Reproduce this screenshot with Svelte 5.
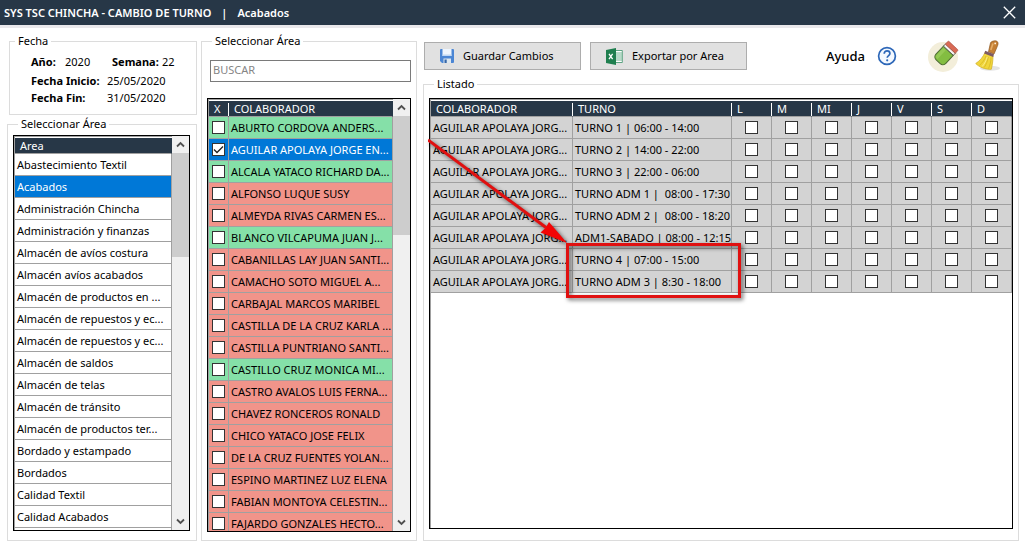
<script>
  const areas = [
    'Abastecimiento Textil', 'Acabados', 'Administración Chincha', 'Administración y finanzas',
    'Almacén de avíos costura', 'Almacén avíos acabados', 'Almacén de productos en ...',
    'Almacén de repuestos y ec...', 'Almacén de repuestos y ec...', 'Almacén de saldos',
    'Almacén de telas', 'Almacén de tránsito', 'Almacén de productos ter...',
    'Bordado y estampado', 'Bordados', 'Calidad Textil', 'Calidad Acabados'
  ];

  const people = $state([
    { name: 'ABURTO CORDOVA ANDERS...', ok: true, checked: false },
    { name: 'AGUILAR APOLAYA JORGE EN...', ok: true, checked: true },
    { name: 'ALCALA YATACO RICHARD DA...', ok: true, checked: false },
    { name: 'ALFONSO LUQUE SUSY', ok: false, checked: false },
    { name: 'ALMEYDA RIVAS CARMEN ES...', ok: false, checked: false },
    { name: 'BLANCO VILCAPUMA JUAN J...', ok: true, checked: false },
    { name: 'CABANILLAS LAY JUAN SANTI...', ok: false, checked: false },
    { name: 'CAMACHO SOTO MIGUEL A...', ok: false, checked: false },
    { name: 'CARBAJAL MARCOS MARIBEL', ok: false, checked: false },
    { name: 'CASTILLA DE LA CRUZ KARLA ...', ok: false, checked: false },
    { name: 'CASTILLA PUNTRIANO SANTI...', ok: false, checked: false },
    { name: 'CASTILLO CRUZ MONICA MI...', ok: true, checked: false },
    { name: 'CASTRO AVALOS LUIS FERNA...', ok: false, checked: false },
    { name: 'CHAVEZ RONCEROS RONALD', ok: false, checked: false },
    { name: 'CHICO YATACO JOSE FELIX', ok: false, checked: false },
    { name: 'DE LA CRUZ FUENTES YOLAN...', ok: false, checked: false },
    { name: 'ESPINO MARTINEZ LUZ ELENA', ok: false, checked: false },
    { name: 'FABIAN MONTOYA CELESTIN...', ok: false, checked: false },
    { name: 'FAJARDO GONZALES HECTO...', ok: false, checked: false }
  ]);

  const shifts = [
    'TURNO 1 | 06:00 - 14:00', 'TURNO 2 | 14:00 - 22:00', 'TURNO 3 | 22:00 - 06:00',
    'TURNO ADM 1 |  08:00 - 17:30', 'TURNO ADM 2 |  08:00 - 18:20', 'ADM1-SABADO | 08:00 - 12:15',
    'TURNO 4 | 07:00 - 15:00', 'TURNO ADM 3 | 8:30 - 18:00'
  ];
  const days = ['L', 'M', 'MI', 'J', 'V', 'S', 'D'];

  let selectedArea = $state(1);
  let selectedPerson = $state(1);
</script>

{#snippet scrollbar(size)}
  <div class="scrollbar">
    <button type="button" class="arrow" aria-label="Subir">
      <svg width="9" height="7" viewBox="0 0 9 7"><path d="M1 5.5 4.5 2 8 5.5" /></svg>
    </button>
    <div class="track"><div class="thumb" style="height: {size}%"></div></div>
    <button type="button" class="arrow" aria-label="Bajar">
      <svg width="9" height="7" viewBox="0 0 9 7"><path d="M1 1.5 4.5 5 8 1.5" /></svg>
    </button>
  </div>
{/snippet}

<div class="window">
  <header>
    <h1>SYS TSC CHINCHA - CAMBIO DE TURNO</h1>
    <span class="bar">|</span>
    <span class="current">Acabados</span>
    <button type="button" class="close" aria-label="Cerrar">
      <svg width="13" height="13" viewBox="0 0 13 13"><path d="M.8.8 12.2 12.2M12.2.8.8 12.2" stroke="#fff" stroke-width="1.3" /></svg>
    </button>
  </header>

  <main>
    <section class="left">
      <fieldset class="date">
        <legend>Fecha</legend>
        <div class="line first"><b class="year">Año:</b><span class="value">2020</span><b class="week">Semana:</b><span>22</span></div>
        <div class="line"><b class="label">Fecha Inicio:</b><span>25/05/2020</span></div>
        <div class="line"><b class="label">Fecha Fin:</b><span>31/05/2020</span></div>
      </fieldset>

      <fieldset class="areas">
        <legend>Seleccionar Área</legend>
        <div class="list">
          <div class="rows">
            <table>
              <thead><tr><th>Area</th></tr></thead>
              <tbody>
                {#each areas as area, i}
                  <tr class:selected={i === selectedArea} onclick={() => (selectedArea = i)}><td>{area}</td></tr>
                {/each}
                <tr><td></td></tr>
              </tbody>
            </table>
          </div>
          {@render scrollbar(29)}
        </div>
      </fieldset>
    </section>

    <fieldset class="staff">
      <legend>Seleccionar Área</legend>
      <input class="search" type="text" placeholder="BUSCAR" aria-label="Buscar" />
      <div class="list">
        <div class="rows">
          <table>
            <colgroup><col class="tick" /><col /></colgroup>
            <thead><tr><th class="x">X</th><th>COLABORADOR</th></tr></thead>
            <tbody>
              {#each people as person, i}
                <tr class={person.ok ? 'green' : 'red'} class:selected={i === selectedPerson} onclick={() => (selectedPerson = i)}>
                  <td class="check"><input type="checkbox" bind:checked={person.checked} aria-label={person.name} /></td>
                  <td>{person.name}</td>
                </tr>
              {/each}
            </tbody>
          </table>
        </div>
        {@render scrollbar(30)}
      </div>
    </fieldset>

    <section class="right">
      <div class="toolbar">
        <button type="button" class="action">
          <svg width="14" height="14" viewBox="0 0 14 14">
            <path d="M0 1a1 1 0 0 1 1-1h12a1 1 0 0 1 1 1v12a1 1 0 0 1-1 1H2l-2-2z" fill="#4b86d4" />
            <path d="M2.5 0h9v7h-9z" fill="#eef5fd" />
            <path d="M2.5 5.5h9V7h-9z" fill="#bfd7f3" />
            <path d="M3.5 9.5h7.5V14H3.5z" fill="#dde7ef" />
            <path d="M4.5 10.5h2.2V14H4.5z" fill="#3566a8" />
          </svg>
          Guardar Cambios
        </button>
        <button type="button" class="action">
          <svg width="17" height="17" viewBox="0 0 17 17">
            <path d="M9 2.5h7.3v12H9z" fill="#fff" stroke="#3b9168" stroke-width=".8" />
            <path d="M11 4v9M13 4v9M15 4v9" stroke="#6fb491" stroke-width="1" />
            <path d="M0 2 10 0v17L0 15z" fill="#1f7f4f" />
            <path d="m3 5.8 3.6 5.4M6.6 5.8 3 11.2" stroke="#fff" stroke-width="1.3" />
          </svg>
          Exportar por Area
        </button>

        <div class="tools">
          <span class="help">Ayuda</span>
          <button type="button" class="tool" aria-label="Ayuda">
            <svg width="20" height="20" viewBox="0 0 20 20" fill="none">
              <circle cx="10" cy="10" r="8.4" fill="#f4f9ff" stroke="#2d67b8" stroke-width="1.7" />
              <path d="M7.2 7.7c0-1.8 1.2-2.8 2.9-2.8s2.8 1 2.8 2.5c0 2.1-2.7 2.2-2.7 4.4" stroke="#2d67b8" stroke-width="1.7" />
              <circle cx="10.2" cy="14.3" r="1.1" fill="#2d67b8" />
            </svg>
          </button>
          <button type="button" class="tool eraser" aria-label="Borrar">
            <svg width="32" height="32" viewBox="0 0 32 32">
              <circle cx="16" cy="17" r="15" fill="#f3eeda" />
              <g transform="rotate(43 18.500 13.500)">
                <path d="M12 9.500h13.500v11a4 4 0 0 1-4 4H16a4 4 0 0 1-4-4z" fill="#83bd41" stroke="#4d6b33" stroke-width="1" />
                <path d="M13 11h3.500v12H16a3 3 0 0 1-3-3z" fill="#95c954" />
                <path d="M12 6.500h13.500v3H12z" fill="#f3f3ef" stroke="#4c5148" stroke-width=".8" />
                <path d="M12 3.300a1 1 0 0 1 1-1h11.500a1 1 0 0 1 1 1v3.500H12z" fill="#d96a55" stroke="#a44d40" stroke-width=".6" />
              </g>
            </svg>
          </button>
          <button type="button" class="tool" aria-label="Limpiar">
            <svg width="26" height="32" viewBox="0 0 26 32">
              <ellipse cx="15" cy="28.3" rx="10" ry="2.5" fill="#e4e4e4" />
              <path d="M15.500 2.800C17 .6 21.400.2 22.600 1.900c.9 1.400.2 3.200-.4 4.700L19 14l-5.500-2.200z" fill="#c58035" stroke="#8e5821" stroke-width=".7" />
              <path d="M18 3.500 15.800 10" stroke="#e6ae68" stroke-width="1.600" />
              <circle cx="20.200" cy="3.400" r=".9" fill="#fff3df" />
              <path d="M10 12.500c-2 4.500-5 8.300-9.300 11 3.400 3.600 9.500 6 15.600 5.800 1-4 1.700-8.300 1.700-13.200z" fill="#f1d63b" stroke="#cfae22" stroke-width=".7" />
              <path d="M11 16c-1.500 4-3.300 6.500-6.500 9.300M13.300 17c-.7 4-2 7-4 10.500M16 17.500c0 4-1 7.500-2.500 11" stroke="#d6b526" stroke-width=".8" fill="none" />
              <path d="M12.200 17c-1 3.600-2.500 6.500-5 9.500" stroke="#fbec8d" stroke-width="1" fill="none" />
              <path d="m10.200 10.800 8.800 3.400-.8 2.800-9-3.500z" fill="#7d5a63" />
            </svg>
          </button>
        </div>
      </div>

      <fieldset class="listing">
        <legend>Listado</legend>
        <div class="list">
          <div class="rows">
            <table>
              <colgroup><col /><col class="shift" />{#each days as _}<col class="day" />{/each}</colgroup>
              <thead>
                <tr><th>COLABORADOR</th><th>TURNO</th>{#each days as day}<th>{day}</th>{/each}</tr>
              </thead>
              <tbody>
                {#each shifts as shift}
                  <tr class="gray">
                    <td>AGUILAR APOLAYA JORG...</td>
                    <td>{shift}</td>
                    {#each days as day}
                      <td class="check"><input type="checkbox" aria-label="{shift} {day}" /></td>
                    {/each}
                  </tr>
                {/each}
              </tbody>
            </table>
          </div>
          <svg class="callout" width="320" height="210" viewBox="0 0 320 210" fill="none">
            <path d="M0 42 118 129.500" stroke="#e01010" stroke-width="3" />
            <path d="M139 145 112.500 134.500l5-4.500 3.500-6z" fill="#f30505" />
            <rect x="139.500" y="146.500" width="172" height="52" stroke="#e01010" stroke-width="3" />
          </svg>
        </div>
      </fieldset>
    </section>
  </main>
</div>

<style>
  :global(body) { margin: 0; background: #fff; }
  .window {
    display: flex;
    flex-direction: column;
    height: 100vh;
    color: #000;
    font: 11px/16px "Noto Sans", "Open Sans", sans-serif;
  }
  .window * { box-sizing: border-box; }
  button, input { font: inherit; color: inherit; }
  button { padding: 0; border: 0; background: none; }

  header {
    display: flex;
    align-items: center;
    flex: none;
    height: 28px;
    padding: 0 9px 0 4px;
    border-bottom: 3px solid #e9e8eb;
    background: #273747;
    color: #fff;
    font-weight: 600;
  }
  h1 { margin: 0; font: inherit; }
  .bar { margin: 0 10px; }
  .close { display: flex; margin-left: auto; }

  main {
    display: grid;
    grid-template-columns: 190px 216px minmax(0, 1fr);
    gap: 4px;
    flex: 1;
    min-height: 0;
    padding: 0 6px 6px 7px;
  }
  section { display: flex; flex-direction: column; min-height: 0; }
  .right { padding-left: 2px; }

  fieldset {
    display: flex;
    flex-direction: column;
    min-width: 0;
    min-height: 0;
    margin: 0;
    border: 1px solid #dcdcdc;
  }
  legend { margin-left: 5px; padding: 0 3px; }

  .date { margin: 5px 0 1px 2px; padding: 5px 6px 7px 0; }
  .line { display: flex; margin-bottom: 1px; padding-left: 21px; }
  .first { margin-bottom: 3px; }
  .year { width: 34px; }
  .value { width: 47px; }
  .week { width: 50px; }
  .label { width: 76px; }

  .areas { flex: 1; padding: 3px 6px 9px 5px; }
  .staff { margin-top: 5px; padding: 11px 5px 8px 5px; }
  .listing { flex: 1; padding: 6px 5px 11px 5px; }

  .list {
    position: relative;
    display: flex;
    flex: 1;
    min-height: 0;
    border: 1px solid #000;
  }
  .rows {
    flex: 1;
    min-width: 0;
    overflow: hidden;
    border-top: 1px solid #a0a0a0;
    border-left: 1px solid #a0a0a0;
  }

  table { width: 100%; table-layout: fixed; border-spacing: 0; border-top: 1px solid #fff; }
  th, td {
    overflow: hidden;
    padding: 0 0 0 2px;
    border-right: 1px solid #a0a0a0;
    border-bottom: 1px solid #a0a0a0;
    text-align: left;
    font-weight: 400;
    white-space: pre;
  }
  th {
    height: 16px;
    padding-left: 5px;
    border-right-color: #273747;
    background: #273747;
    color: #fff;
    line-height: 15px;
  }
  th:not(:last-child) {
    background: linear-gradient(#fff, #fff) right center / 1px 13px no-repeat border-box #273747;
    border-right-color: transparent;
  }
  td { height: 22px; line-height: 21px; }
  .tick { width: 20px; }
  .shift { width: 159px; }
  .day { width: 40px; }
  .green { background: #85e0a8; }
  .red { background: #f1948a; }
  .gray { background: #d3d3d3; }
  .selected { background: #0078d7; color: #fff; }

  .check { padding: 0; }
  .check input {
    display: block;
    width: 13px;
    height: 13px;
    margin: 0 auto;
    appearance: none;
    border: 1px solid #333;
    background: #fff;
  }
  .check input:checked {
    background: #fff url("data:image/svg+xml,%3Csvg xmlns='http://www.w3.org/2000/svg' viewBox='0 0 11 11'%3E%3Cpath d='M1 5.500 4 8.500 10 2.500' fill='none' stroke='%23222' stroke-width='1.300'/%3E%3C/svg%3E");
  }

  .search {
    flex: none;
    width: auto;
    height: 22px;
    margin: 0 0 16px 3px;
    padding: 0 2px 3px;
    border: 1px solid #7a7a7a;
    border-radius: 0;
    background: #fff;
  }
  .search::placeholder { color: #858585; opacity: 1; }

  .scrollbar { display: flex; flex: none; flex-direction: column; width: 17px; background: #f0f0f0; }
  .arrow { display: flex; align-items: center; justify-content: center; height: 17px; }
  .arrow path { fill: none; stroke: #505050; stroke-width: 1.8; }
  .track { flex: 1; }
  .thumb { background: #cdcdcd; }

  .toolbar { display: flex; align-items: center; gap: 9px; height: 48px; padding: 8px 18px 0 1px; }
  .action {
    display: flex;
    align-items: center;
    gap: 9px;
    width: 157px;
    height: 28px;
    padding-left: 15px;
    border: 1px solid #adadad;
    background: #e1e1e1;
  }
  .tools { display: flex; align-items: center; margin-left: auto; }
  .help { margin-right: 12px; font-size: 13px; font-weight: 500; }
  .tool { display: flex; }
  .eraser { margin: 0 16px 0 30px; }

  .callout {
    position: absolute;
    top: -1px;
    left: -2px;
    pointer-events: none;
    filter: drop-shadow(2px 2px 2px rgb(0 0 0 / 60%));
  }
</style>
